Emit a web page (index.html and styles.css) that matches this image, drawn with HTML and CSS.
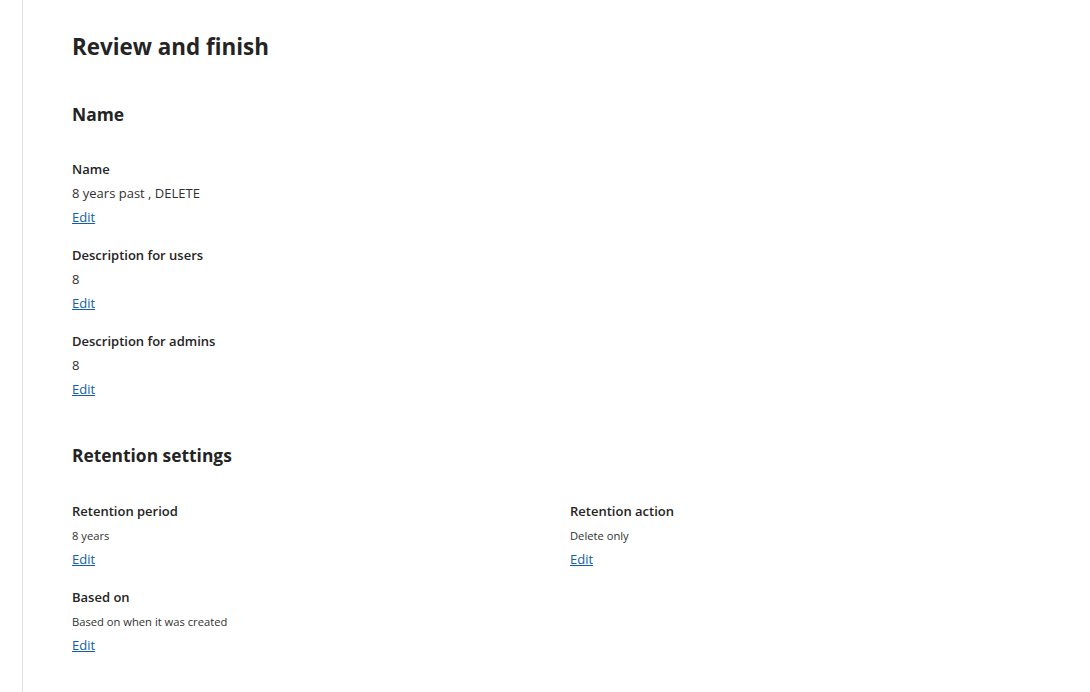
FILE: index.html
```html
<!DOCTYPE html>
<html lang="en">
<head>
<meta charset="utf-8">
<title>Review and finish</title>
<link rel="stylesheet" href="styles.css">
</head>
<body>
<div class="panel">
  <main class="content">
    <h1 class="title">Review and finish</h1>

    <section class="section">
      <h2 class="section-title">Name</h2>
      <div class="fields">
        <div class="field">
          <div class="label">Name</div>
          <div class="value">8 years past , DELETE</div>
          <a class="edit" href="#">Edit</a>
        </div>
        <div class="field">
          <div class="label">Description for users</div>
          <div class="value">8</div>
          <a class="edit" href="#">Edit</a>
        </div>
        <div class="field">
          <div class="label">Description for admins</div>
          <div class="value">8</div>
          <a class="edit" href="#">Edit</a>
        </div>
      </div>
    </section>

    <section class="section retention">
      <h2 class="section-title">Retention settings</h2>
      <div class="fields grid">
        <div class="field">
          <div class="label">Retention period</div>
          <div class="value small">8 years</div>
          <a class="edit" href="#">Edit</a>
        </div>
        <div class="field">
          <div class="label">Retention action</div>
          <div class="value small">Delete only</div>
          <a class="edit" href="#">Edit</a>
        </div>
        <div class="field">
          <div class="label">Based on</div>
          <div class="value small">Based on when it was created</div>
          <a class="edit" href="#">Edit</a>
        </div>
      </div>
    </section>
  </main>
</div>
</body>
</html>
```

FILE: styles.css
```css
html, body {
  margin: 0;
  padding: 0;
  height: 100%;
  background: #ffffff;
}

body {
  font-family: "Segoe UI", "Open Sans", "Noto Sans", sans-serif;
  color: #242424;
}

.panel {
  margin-left: 22px;
  min-height: 100%;
  border-left: 1px solid #e0e0e0;
  box-sizing: border-box;
}

.content {
  padding: 31px 22px 0 49px;
}

.title {
  margin: 0;
  font-size: 22.4px;
  line-height: 32px;
  font-weight: 700;
  color: #242424;
}

.section {
  margin-top: 37px;
}

.section.retention {
  margin-top: 40px;
}

.section-title {
  margin: 0 0 29px;
  font-size: 17.4px;
  line-height: 28px;
  font-weight: 700;
}

.retention .section-title {
  margin-bottom: 30px;
}

.fields {
  display: flex;
  flex-direction: column;
  gap: 14px;
}

.fields.grid {
  display: grid;
  grid-template-columns: 1fr 1fr;
  row-gap: 14px;
  column-gap: 0;
}

.field {
  display: flex;
  flex-direction: column;
  align-items: flex-start;
}

.label {
  font-size: 13px;
  line-height: 24px;
  font-weight: 600;
}

.value {
  font-size: 13px;
  line-height: 24px;
  color: #323130;
}

.value.small {
  font-size: 11.2px;
  padding-top: 2px;
  line-height: 22px;
}

.edit {
  font-size: 13px;
  line-height: 24px;
  color: #115ea3;
  text-decoration: underline;
}
```
